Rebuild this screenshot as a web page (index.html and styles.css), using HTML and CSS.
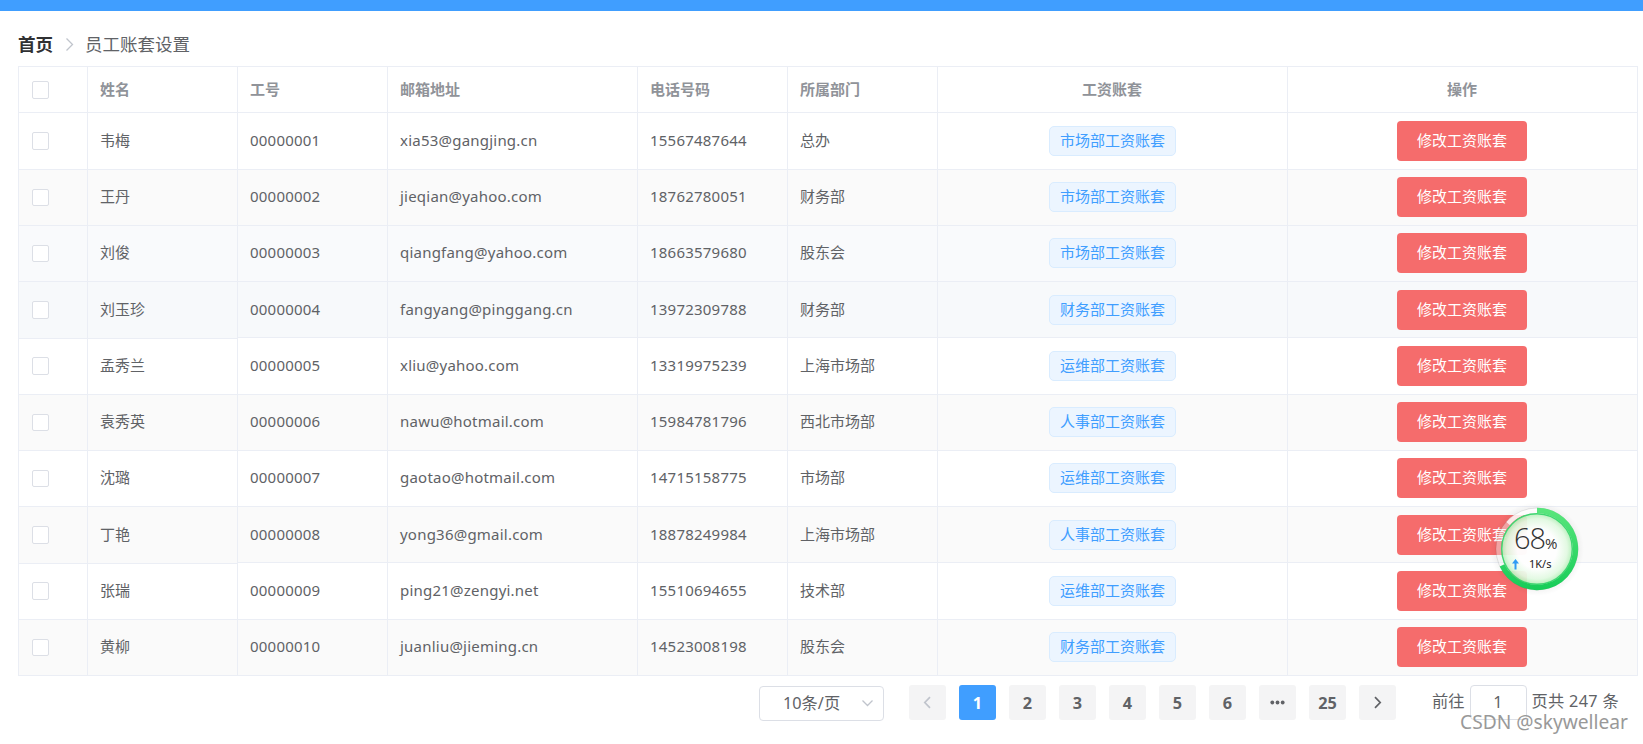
FILE: index.html
```html
<!DOCTYPE html>
<html lang="zh-CN">
<head>
    <meta charset="UTF-8">
    <meta name="viewport" content="width=device-width, initial-scale=1.0">
    <title>员工账套设置</title>
    <link rel="stylesheet" href="styles.css">
</head>
<body>

    <div class="topbar"></div>

    <div class="main">
        <div class="breadcrumb">
            <b>首页</b>
            <svg class="sep" width="9" height="15" viewBox="0 0 9 15"><path d="M1.5 1.5l6 6-6 6"/></svg>
            <span>员工账套设置</span>
        </div>

        <div class="table">
            <div class="row head">
                <div class="cell"><i class="checkbox"></i></div>
                <div class="cell"><span>姓名</span></div>
                <div class="cell"><span>工号</span></div>
                <div class="cell"><span>邮箱地址</span></div>
                <div class="cell"><span>电话号码</span></div>
                <div class="cell"><span>所属部门</span></div>
                <div class="cell"><span>工资账套</span></div>
                <div class="cell"><span>操作</span></div>
            </div>
            <div class="row tall low">
                <div class="cell"><i class="checkbox"></i></div>
                <div class="cell"><span>韦梅</span></div>
                <div class="cell"><span class="num">00000001</span></div>
                <div class="cell"><span class="num">xia53@gangjing.cn</span></div>
                <div class="cell"><span class="num">15567487644</span></div>
                <div class="cell"><span>总办</span></div>
                <div class="cell"><div class="tag">市场部工资账套</div></div>
                <div class="cell"><button class="btn">修改工资账套</button></div>
            </div>
            <div class="row striped">
                <div class="cell"><i class="checkbox"></i></div>
                <div class="cell"><span>王丹</span></div>
                <div class="cell"><span class="num">00000002</span></div>
                <div class="cell"><span class="num">jieqian@yahoo.com</span></div>
                <div class="cell"><span class="num">18762780051</span></div>
                <div class="cell"><span>财务部</span></div>
                <div class="cell"><div class="tag">市场部工资账套</div></div>
                <div class="cell"><button class="btn">修改工资账套</button></div>
            </div>
            <div class="row hover-out">
                <div class="cell"><i class="checkbox"></i></div>
                <div class="cell"><span>刘俊</span></div>
                <div class="cell"><span class="num">00000003</span></div>
                <div class="cell"><span class="num">qiangfang@yahoo.com</span></div>
                <div class="cell"><span class="num">18663579680</span></div>
                <div class="cell"><span>股东会</span></div>
                <div class="cell"><div class="tag">市场部工资账套</div></div>
                <div class="cell"><button class="btn">修改工资账套</button></div>
            </div>
            <div class="row hover low fixed-over">
                <div class="cell"><i class="checkbox"></i></div>
                <div class="cell"><span>刘玉珍</span></div>
                <div class="cell"><span class="num">00000004</span></div>
                <div class="cell"><span class="num">fangyang@pinggang.cn</span></div>
                <div class="cell"><span class="num">13972309788</span></div>
                <div class="cell"><span>财务部</span></div>
                <div class="cell"><div class="tag">财务部工资账套</div></div>
                <div class="cell"><button class="btn">修改工资账套</button></div>
            </div>
            <div class="row tall low">
                <div class="cell"><i class="checkbox"></i></div>
                <div class="cell"><span>孟秀兰</span></div>
                <div class="cell"><span class="num">00000005</span></div>
                <div class="cell"><span class="num">xliu@yahoo.com</span></div>
                <div class="cell"><span class="num">13319975239</span></div>
                <div class="cell"><span>上海市场部</span></div>
                <div class="cell"><div class="tag">运维部工资账套</div></div>
                <div class="cell"><button class="btn">修改工资账套</button></div>
            </div>
            <div class="row striped">
                <div class="cell"><i class="checkbox"></i></div>
                <div class="cell"><span>袁秀英</span></div>
                <div class="cell"><span class="num">00000006</span></div>
                <div class="cell"><span class="num">nawu@hotmail.com</span></div>
                <div class="cell"><span class="num">15984781796</span></div>
                <div class="cell"><span>西北市场部</span></div>
                <div class="cell"><div class="tag">人事部工资账套</div></div>
                <div class="cell"><button class="btn">修改工资账套</button></div>
            </div>
            <div class="row">
                <div class="cell"><i class="checkbox"></i></div>
                <div class="cell"><span>沈璐</span></div>
                <div class="cell"><span class="num">00000007</span></div>
                <div class="cell"><span class="num">gaotao@hotmail.com</span></div>
                <div class="cell"><span class="num">14715158775</span></div>
                <div class="cell"><span>市场部</span></div>
                <div class="cell"><div class="tag">运维部工资账套</div></div>
                <div class="cell"><button class="btn">修改工资账套</button></div>
            </div>
            <div class="row striped low fixed-over">
                <div class="cell"><i class="checkbox"></i></div>
                <div class="cell"><span>丁艳</span></div>
                <div class="cell"><span class="num">00000008</span></div>
                <div class="cell"><span class="num">yong36@gmail.com</span></div>
                <div class="cell"><span class="num">18878249984</span></div>
                <div class="cell"><span>上海市场部</span></div>
                <div class="cell"><div class="tag">人事部工资账套</div></div>
                <div class="cell"><button class="btn">修改工资账套</button></div>
            </div>
            <div class="row tall low">
                <div class="cell"><i class="checkbox"></i></div>
                <div class="cell"><span>张瑞</span></div>
                <div class="cell"><span class="num">00000009</span></div>
                <div class="cell"><span class="num">ping21@zengyi.net</span></div>
                <div class="cell"><span class="num">15510694655</span></div>
                <div class="cell"><span>技术部</span></div>
                <div class="cell"><div class="tag">运维部工资账套</div></div>
                <div class="cell"><button class="btn">修改工资账套</button></div>
            </div>
            <div class="row striped">
                <div class="cell"><i class="checkbox"></i></div>
                <div class="cell"><span>黄柳</span></div>
                <div class="cell"><span class="num">00000010</span></div>
                <div class="cell"><span class="num">juanliu@jieming.cn</span></div>
                <div class="cell"><span class="num">14523008198</span></div>
                <div class="cell"><span>股东会</span></div>
                <div class="cell"><div class="tag">财务部工资账套</div></div>
                <div class="cell"><button class="btn">修改工资账套</button></div>
            </div>
        </div>

        <div class="pagination">
            <div class="select">
                <span>10条/页</span>
                <svg width="13" height="9" viewBox="0 0 13 9"><path d="M1.5 1.5l5 5 5-5"/></svg>
            </div>
            <div class="pager">
                <div class="page prev"><svg width="9" height="13" viewBox="0 0 9 13"><path d="M7 1.2L1.8 6.5 7 11.8"/></svg></div>
                <div class="page active">1</div>
                <div class="page">2</div>
                <div class="page">3</div>
                <div class="page">4</div>
                <div class="page">5</div>
                <div class="page">6</div>
                <div class="page"><svg class="more" width="15" height="5" viewBox="0 0 15 5"><circle cx="2.3" cy="2.5" r="1.9"/><circle cx="7.5" cy="2.5" r="1.9"/><circle cx="12.7" cy="2.5" r="1.9"/></svg></div>
                <div class="page">25</div>
                <div class="page"><svg width="9" height="13" viewBox="0 0 9 13"><path d="M2 1.2l5.2 5.3L2 11.8"/></svg></div>
            </div>
            <div class="jump">
                <span>前往</span>
                <span class="jump-input">1</span>
                <span class="total">页共 247 条</span>
            </div>
        </div>
    </div>

    <!-- floating memory / network ball -->
    <div class="ball">
        <svg width="96" height="96" viewBox="0 0 96 96">
            <defs>
                <radialGradient id="shade">
                    <stop offset="0.8" stop-color="#000" stop-opacity="0.06"/>
                    <stop offset="1" stop-color="#000" stop-opacity="0"/>
                </radialGradient>
                <radialGradient id="inner">
                    <stop offset="0.55" stop-color="#fff" stop-opacity="0.97"/>
                    <stop offset="0.85" stop-color="#e2fae2" stop-opacity="0.93"/>
                    <stop offset="1" stop-color="#b4f0b8" stop-opacity="0.9"/>
                </radialGradient>
                <linearGradient id="ring" x1="0" y1="0" x2="0" y2="1">
                    <stop offset="0" stop-color="#58e57b"/>
                    <stop offset="1" stop-color="#18cd59"/>
                </linearGradient>
            </defs>
            <circle cx="48" cy="48" r="47" fill="url(#shade)"/>
            <path d="M13.1 64.3A38.5 38.5 0 0 1 19 22.7" fill="none" stroke="#fff" stroke-opacity="0.4" stroke-width="5"/>
            <path d="M19 22.7A38.5 38.5 0 0 1 48 9.5" fill="none" stroke="#fff" stroke-opacity="0.85" stroke-width="5"/>
            <circle cx="48" cy="48" r="41" fill="none" stroke="#000" stroke-opacity="0.12" stroke-width="0.8"/>
            <circle cx="48" cy="48" r="35.5" fill="url(#inner)"/>
            <circle cx="48" cy="48" r="35.3" fill="none" stroke="#3fd672" stroke-width="1.4"/>
            <path d="M48 9.5A38.5 38.5 0 1 1 13.1 64.3" fill="none" stroke="url(#ring)" stroke-width="5.4"/>
        </svg>
        <div class="ball-num">68<small>%</small></div>
        <div class="ball-net">
            <svg width="7" height="11" viewBox="0 0 7 11"><path d="M3.5 0L7 4.6H4.5V10.5h-2V4.6H0z"/></svg>
            <span>1K/s</span>
        </div>
    </div>

    <div class="watermark">CSDN @skywellear</div>

</body>
</html>
```
FILE: styles.css
```css
* {
    box-sizing: border-box;
    margin: 0;
    padding: 0;
}

body {
    font-family: "Noto Sans", "Noto Sans CJK SC", sans-serif;
    font-size: 15px;
    color: #606266;
    background-color: #fff;
    width: 1643px;
    height: 744px;
    overflow: hidden;
    position: relative;
}

.topbar {
    height: 11px;
    background-color: #409eff;
}

.main {
    padding: 21px 5px 0 18px;
}

.breadcrumb {
    display: flex;
    align-items: center;
    height: 24px;
    margin-bottom: 10px;
    font-size: 17.5px;
    line-height: 24px;
}

.breadcrumb b {
    color: #303133;
}

.sep {
    margin: 0 11px 0 12px;
    fill: none;
    stroke: #c0c4cc;
    stroke-width: 1.3;
}

/* table */
.table {
    border: 1px solid #ebeef5;
    border-right: none;
    border-bottom: none;
    width: 1620px;
}

.row {
    display: grid;
    grid-template-columns: 69px 150px 150px 250px 150px 150px 350px 350px;
    grid-template-rows: 100%;
    height: 56px;
    background-color: #fff;
}

.cell {
    display: flex;
    align-items: center;
    height: 100%;
    padding: 7px 13px 8px;
    border-right: 1px solid #ebeef5;
    border-bottom: 1px solid #ebeef5;
    background-color: inherit;
    line-height: 20px;
    white-space: nowrap;
}

.cell span {
    margin: -2px 0 0 -1px;
}

.cell .num {
    letter-spacing: 0.22px;
}

.cell:nth-child(n+7) {
    justify-content: center;
}

.low .cell {
    padding: 8px 13px 7px;
}

.tall {
    height: 57px;
}

.tall .cell {
    padding-bottom: 8px;
}

.head {
    height: 46px;
    font-weight: bold;
    color: #909399;
}

.head .cell {
    padding: 0 13px;
}

.striped {
    background-color: #fafafa;
}

.hover-out {
    background-color: #f9fafc;
}

.hover {
    background-color: #f7f9fb;
}

/* left columns end one pixel lower on these rows */
.fixed-over .cell:nth-child(-n+2) {
    height: 57px;
    padding-bottom: 8px;
    position: relative;
    z-index: 1;
}

.checkbox {
    width: 17px;
    height: 17px;
    margin-top: 1px;
    border: 1px solid #dcdfe6;
    border-radius: 2px;
    background-color: #fff;
}

.low .checkbox,
.head .checkbox {
    height: 18px;
    margin-top: 0;
}

.tag {
    width: 127px;
    height: 30px;
    border: 1px solid #d9ecff;
    border-radius: 5px;
    background-color: #ecf5ff;
    color: #409eff;
    line-height: 26px;
    text-align: center;
}

.btn {
    width: 130px;
    height: 40px;
    margin-left: -1px;
    padding-bottom: 2px;
    border: none;
    border-radius: 4px;
    background-color: #f56c6c;
    color: #fff;
    font-family: inherit;
    font-size: 15px;
    line-height: 38px;
}

/* pagination */
.pagination {
    display: flex;
    justify-content: flex-end;
    padding: 9px 19px 0 0;
    font-size: 16.25px;
}

.select {
    display: flex;
    align-items: center;
    justify-content: space-between;
    width: 125px;
    height: 35px;
    margin: 1px 25px 0 0;
    padding: 0 9px 0 23px;
    border: 1px solid #dcdfe6;
    border-radius: 4px;
}

.select span {
    margin-top: -3px;
}

.select svg {
    margin-top: -1px;
    fill: none;
    stroke: #c0c4cc;
    stroke-width: 1.3;
}

.pager {
    display: flex;
    gap: 13px;
}

.page {
    display: flex;
    align-items: center;
    justify-content: center;
    width: 37px;
    height: 35px;
    border-radius: 3px;
    background-color: #f4f4f5;
    font-weight: bold;
}

.page svg {
    fill: none;
    stroke: #606266;
    stroke-width: 1.7;
}

.page .more {
    fill: #606266;
    stroke: none;
}

.page.prev svg {
    stroke: #c0c4cc;
}

.page.active {
    background-color: #409eff;
    color: #fff;
}

.jump {
    display: flex;
    align-items: center;
    width: 187px;
    height: 35px;
    margin-left: 36px;
    line-height: 33px;
    white-space: nowrap;
}

.jump span {
    height: 35px;
}

.jump .jump-input {
    width: 57px;
    margin: 0 5px;
    border: 1px solid #dcdfe6;
    border-radius: 4px;
    line-height: 32px;
    text-align: center;
}

.total {
    letter-spacing: 0.3px;
}

/* floating ball */
.ball {
    position: absolute;
    left: 1489px;
    top: 501px;
    width: 96px;
    height: 96px;
}

.ball > svg {
    display: block;
}

.ball-num {
    position: absolute;
    left: 25px;
    top: 17px;
    font-family: "Open Sans", sans-serif;
    font-weight: 300;
    font-size: 29px;
    line-height: 40px;
    letter-spacing: -1px;
    color: #333;
}

.ball-num small {
    font-size: 15px;
    font-weight: 400;
}

.ball-net {
    position: absolute;
    left: 23px;
    top: 55px;
    display: flex;
    align-items: center;
    gap: 10px;
    height: 16px;
    font-size: 11px;
    color: #222;
}

.ball-net span {
    margin-top: -1px;
}

.ball-net svg {
    fill: #2f9bf4;
}

.watermark {
    position: absolute;
    left: 1460px;
    top: 709px;
    font-size: 19.2px;
    line-height: 26px;
    color: #999;
}
```
